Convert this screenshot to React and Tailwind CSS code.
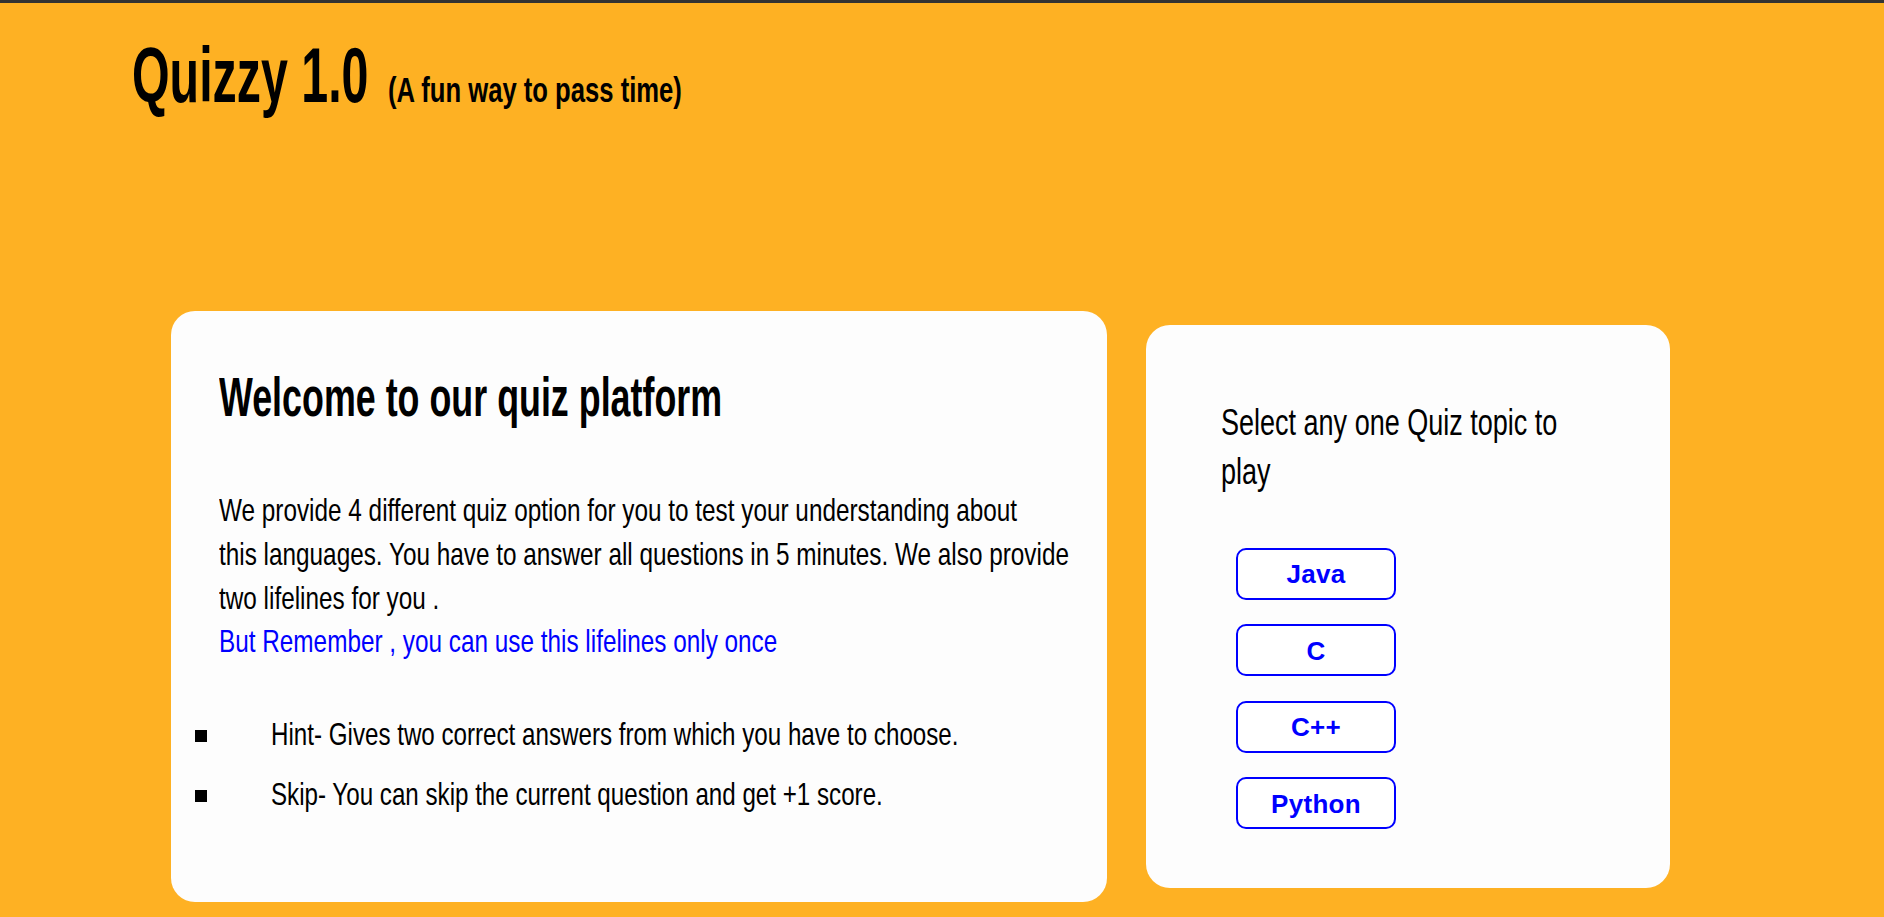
export default function App() {
  const topics = ["Java", "C", "C++", "Python"];
  return (
    <div className="min-h-screen bg-[#feb123] border-t-[3px] border-[#333333] text-black font-['Liberation_Sans',Arial,sans-serif]">
      <header className="pl-[132px] pt-[33px] flex items-baseline">
        <h1 className="w-[256px] shrink-0 whitespace-nowrap text-[78px] leading-[78px] font-bold origin-left scale-x-[0.62]">
          Quizzy 1.0
        </h1>
        <span className="whitespace-nowrap text-[34.5px] font-bold origin-left scale-x-[0.743]">
          (A fun way to pass time)
        </span>
      </header>

      <main className="mt-[194px] pl-[171px] flex items-center gap-[39px]">
        <section className="w-[936px] h-[591px] shrink-0 bg-[#fdfdfd] rounded-[24px] pl-[48px] pt-[56px] overflow-hidden">
          <h2 className="w-[1000px] whitespace-nowrap text-[56px] leading-[60px] font-bold origin-left scale-x-[0.64]">
            Welcome to our quiz platform
          </h2>
          <p className="w-[1100px] mt-[62px] text-[32px] leading-[43.9px] whitespace-nowrap origin-left scale-x-[0.76]">
            We provide 4 different quiz option for you to test your understanding about
            <br />
            this languages. You have to answer all questions in 5 minutes. We also provide
            <br />
            two lifelines for you .
            <br />
            <span className="text-[#0000ff]">But Remember , you can use this lifelines only once</span>
          </p>
          <ul className="mt-[40px] -ml-[24px]">
            <li className="flex items-center gap-[64px] h-[60px]">
              <span className="w-[12px] h-[12px] mt-[3px] bg-black shrink-0"></span>
              <span className="text-[32px] whitespace-nowrap origin-left scale-x-[0.755]">
                Hint- Gives two correct answers from which you have to choose.
              </span>
            </li>
            <li className="flex items-center gap-[64px] h-[60px]">
              <span className="w-[12px] h-[12px] mt-[3px] bg-black shrink-0"></span>
              <span className="text-[32px] whitespace-nowrap origin-left scale-x-[0.755]">
                Skip- You can skip the current question and get +1 score.
              </span>
            </li>
          </ul>
        </section>

        <section className="w-[524px] h-[563px] shrink-0 bg-[#fdfdfd] rounded-[24px] pl-[75px] pt-[73px] overflow-hidden">
          <p className="w-[500px] text-[37px] leading-[49px] whitespace-nowrap origin-left scale-x-[0.73]">
            Select any one Quiz topic to
            <br />
            play
          </p>
          <div className="mt-[52px] ml-[15px] flex flex-col gap-[24.5px]">
            {topics.map((t) => (
              <button
                key={t}
                className="w-[160px] h-[52px] border-2 border-[#0000ff] rounded-[10px] bg-white flex items-center justify-center pt-[2px] font-['Liberation_Sans',Arial,sans-serif] font-bold text-[26px] tracking-[0.3px] text-[#0000ff]"
              >
                {t}
              </button>
            ))}
          </div>
        </section>
      </main>
    </div>
  );
}
